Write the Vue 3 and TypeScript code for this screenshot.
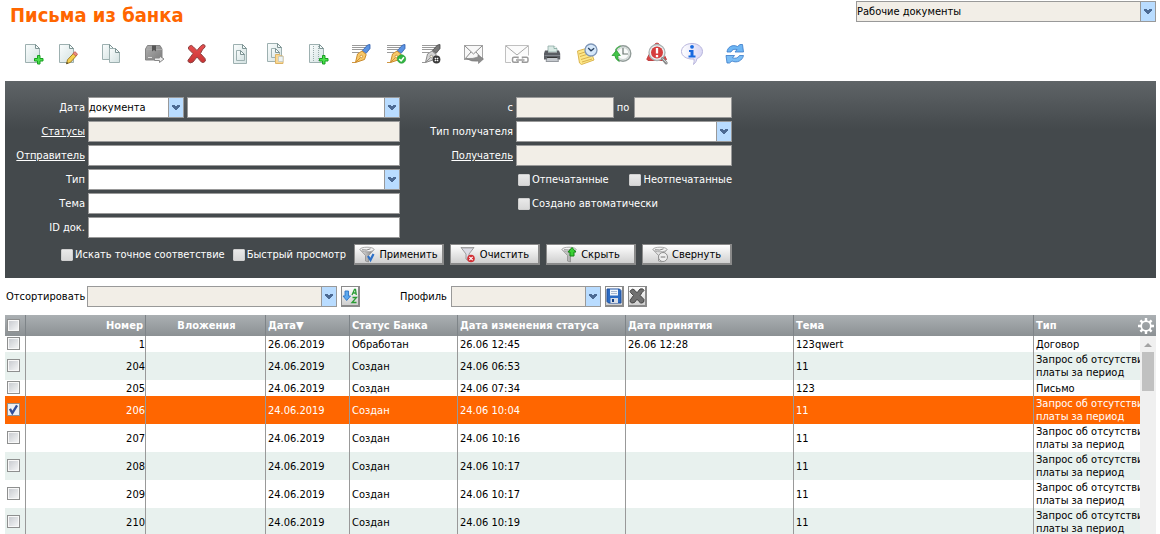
<script setup lang="ts">
import { ref } from 'vue'

interface Row {
  num: string
  date: string
  status: string
  changed: string
  accepted: string
  subject: string
  type: string
  checked: boolean
}

interface Tool {
  id: string
  title: string
}

const zeroPay = 'Запрос об отсутстви\nплаты за период'

function created(num: string, changed: string, subject = '11', type = zeroPay, checked = false): Row {
  return { num, date: '24.06.2019', status: 'Создан', changed, accepted: '', subject, type, checked }
}

const rows = ref<Row[]>([
  { num: '1', date: '26.06.2019', status: 'Обработан', changed: '26.06 12:45', accepted: '26.06 12:28', subject: '123qwert', type: 'Договор', checked: false },
  created('204', '24.06 06:53'),
  created('205', '24.06 07:34', '123', 'Письмо'),
  created('206', '24.06 10:04', '11', zeroPay, true),
  created('207', '24.06 10:16'),
  created('208', '24.06 10:17'),
  created('209', '24.06 10:17'),
  created('210', '24.06 10:19'),
])

const toolGroups: Tool[][] = [
  [{ id: 'create', title: 'Создать' }, { id: 'edit', title: 'Изменить' }],
  [{ id: 'copy', title: 'Копировать' }],
  [{ id: 'archive', title: 'В архив' }],
  [{ id: 'remove', title: 'Удалить' }],
  [{ id: 'template', title: 'Шаблон' }, { id: 'fromTemplate', title: 'Создать по шаблону' }],
  [{ id: 'addColumn', title: 'Добавить' }],
  [{ id: 'sign', title: 'Подписать' }, { id: 'verify', title: 'Проверить подпись' }, { id: 'unsign', title: 'Снять подпись' }],
  [{ id: 'send', title: 'Отправить' }],
  [
    { id: 'linked', title: 'Связанные письма' },
    { id: 'print', title: 'Печать' },
    { id: 'schedule', title: 'Запланировать' },
    { id: 'history', title: 'История' },
    { id: 'alert', title: 'Ошибки' },
    { id: 'info', title: 'Информация' },
  ],
  [{ id: 'refresh', title: 'Обновить' }],
]

const plus = '<path d="M16.5 13.500h2.500v3h3v2.500h-3v3h-2.500v-3h-3v-2.500h3z" fill="#4be04b" stroke="#18a022"/>'
const pen = (grip: string, gripEdge: string, nib: string, edge: string): string =>
  '<path d="M3 3.500h16M3 5.500h14M3 7.500h11M3 10.500h7" stroke="#9a9a9a"/>' +
  `<path d="M21 2.500v4l-4 5-3.500-3 5-5.500z" fill="${grip}" stroke="${gripEdge}" stroke-width=".8"/>` +
  `<path d="M13 9l4.200 3.500-1.700 5-9 3 2-8.500z" fill="${nib}" stroke="${edge}"/>` +
  `<path d="M3 20.500h3.500l5-5" fill="none" stroke="${edge}" stroke-width=".9"/><circle cx="12.300" cy="14.500" r="1.300" fill="#fff6dc" stroke="${edge}" stroke-width=".8"/>`
const page = (x: number, y: number, w: number, h: number): string =>
  `<path d="M${x} ${y}h${w - 4}l4 4v${h - 4}h-${w}z" fill="url(#paper)" stroke="#9db0b0"/>` +
  `<path d="M${x + w - 4} ${y}v4h4z" fill="#f4fafa" stroke="#7e9494"/>`

const icons: Record<string, string> = {
  create: page(4.5, 2.5, 14, 18) + plus,
  edit:
    page(3.5, 2.5, 14, 18) +
    '<path d="M10.500 21.800l1-4 6.500-7 2.800 2.500-6.300 7z" fill="#f5cf4d" stroke="#94721c" stroke-width=".9"/><path d="M17 11.500l1.800-1.900 2.800 2.500-1.800 1.900z" fill="#e98980" stroke="#b84d45" stroke-width=".7"/><path d="M10.300 22l.6-2 1.400 1.200z" fill="#333"/>',
  copy: page(3.5, 2.5, 11, 15) + page(10.5, 6.5, 10, 14),
  archive:
    '<path d="M3.500 7l2-3.500h12.500l2 3.500v11h-16.500z" fill="url(#steel)" stroke="#858585"/><path d="M4 7.500h16" stroke="#aaa"/><path d="M10 3.500h4v6l-2-1.500-2 1.500z" fill="#555"/><path d="M6 15.500h4" stroke="#ddd"/><path d="M12.500 16h5v-2l4.500 3-4.500 3.500v-2h-5z" fill="#ededed" stroke="#888"/>',
  remove:
    '<path d="M4 4.500q2.500-2.500 4.500.5l3.500 3.500q3.500-5 6-6 3 .5 2 2.500-3 2.500-4.500 6.500l4.500 5q1.500 3-1.500 4-2 .5-3.500-2l-3-3.500-4 5q-3 2-5-.5-.5-1.500 1-2.500l4-5.500-4-4q-1.500-1.500 0-3z" fill="url(#red)" stroke="#8d4545"/>',
  template: page(5.5, 2.5, 13, 19) + page(8.5, 8.5, 8, 10),
  fromTemplate:
    page(4.5, 1.5, 14, 18) + page(8.5, 6.5, 8, 9) +
    '<path d="M12.500 12.500h4l1 1.500h2.500v7.500h-7.500z" fill="#f9d793" stroke="#dcb468"/><path d="M15.500 14.500h4.500v5h-4.500z" fill="#eef3f3" stroke="#b9c4c4" stroke-width=".7"/>',
  addColumn:
    page(3.5, 2.5, 14, 18) +
    '<path d="M7.500 4v16M12.500 4v16" stroke="#9aabab" stroke-dasharray="1 1"/>' + plus,
  sign: pen('#5b93e2', '#2d5cab', '#f8c96a', '#c98a2c'),
  verify:
    pen('#5b93e2', '#2d5cab', '#f8c96a', '#c98a2c') +
    '<circle cx="17.500" cy="17" r="4.200" fill="#31b542" stroke="#2c9c3b" stroke-width=".7"/><path d="M15.200 17l1.900 1.900 2.800-3.700" fill="none" stroke="#fff" stroke-width="1.600"/>',
  unsign:
    pen('#777', '#484848', '#d4d4d4', '#8a8a8a') +
    '<circle cx="17.500" cy="17.500" r="3.900" fill="#3a3a3a"/><path d="M15.800 15.800l3.400 3.400M19.200 15.800l-3.400 3.400" stroke="#fff" stroke-width="1.200"/><circle cx="17.500" cy="17.500" r=".8" fill="#333"/>',
  send:
    '<path d="M2.500 3.500h18v14h-18z" fill="#f8f8f8" stroke="#a5a5a5"/><path d="M2.500 3.500l9 8.500 9-8.500M2.500 17.500l6.500-7.500M20.500 17.500l-6.500-7.500" fill="none" stroke="#888"/><path d="M4 16.500q7 .5 12-1.500v-2l5.500 4-5 4.500v-2.500q-7 1-12.500-2.500z" fill="#8d8d8d" stroke="#777" stroke-width=".6"/>',
  linked:
    '<path d="M.5 3.500h23v17h-23z" fill="#fbfbfb" stroke="#c0c0c0"/><path d="M1 4l11 9 11-9" fill="none" stroke="#a8a8a8"/><path d="M6 13.500h18v9h-18z" fill="#fff"/><g fill="none" stroke="#9a9a9a" stroke-width="1.500"><path d="M13 16.500v-1.200h-4q-1.500 0-1.500 1.500v2q0 1.500 1.500 1.500h4v-1.200"/><path d="M17.500 16.500v-1.200h4q1.500 0 1.500 1.500v2q0 1.500-1.500 1.500h-4v-1.200M11 18h8.500"/></g>',
  print:
    '<path d="M8 10V4h6l3 2.500V10z" fill="#d9e9e4" stroke="#91aaa6" stroke-width=".8"/><path d="M14 4v2.500h3" fill="#fff" stroke="#7da69b" stroke-width=".8"/><path d="M5 8.500h3v2h9v-2h2l1.200 3v6h-16.200v-6z" fill="#5a5d63"/><path d="M4.500 13.500h15.500" stroke="#83878e"/><path d="M7 15.500h10.500l1 4h-12.500z" fill="#c5c9ce" stroke="#747880" stroke-width=".7"/><path d="M7 15.500h10.500" stroke="#333"/>',
  schedule:
    '<path d="M2.500 9l12-3.500 4.500 12.500-12.500 4.500-2-1.500z" fill="#fde788" stroke="#dcb650"/><path d="M4 12l9-3M5 14.500l10-3M6 17.500l10-3M7 20l10-3" stroke="#cfa33c" stroke-width=".8"/><circle cx="16" cy="8" r="6" fill="#d6e8fa" stroke="#7f97b8" stroke-width="1.300"/><path d="M13.200 6l2.800 2.800 3.200-2.500" fill="none" stroke="#29405f" stroke-width="1.300"/>',
  history:
    '<circle cx="13" cy="11.500" r="7.800" fill="#e8eceb" stroke="#929c99" stroke-width="1.400"/><circle cx="13" cy="11.500" r="6" fill="#f8faf9" stroke="#c7d0cd"/><path d="M13 6v6h5" fill="none" stroke="#697670" stroke-width="1.200"/><path d="M6.500 8.500L2 13.500h2.800q.5 4 4.500 6-2-3-1.500-6h2.500z" fill="#42c548" stroke="#2c9a35" stroke-width=".8"/><path d="M5.500 8.500q1-3 5-4.500" fill="none" stroke="#50b657" stroke-width="1.300"/>',
  alert:
    '<path d="M10 2l2-1 2 1 7.500 15.500-3 1H3q-2-1-.5-3z" fill="#d84646" stroke="#c04242"/><circle cx="12" cy="10.500" r="8" fill="#edf1f1" stroke="#a9b0b1" stroke-width="1.300"/><circle cx="12" cy="10.500" r="6" fill="#d63d3d"/><path d="M12 6v5.500M12 13v2.200" stroke="#fff" stroke-width="2.300"/><path d="M17.500 16.500l3.700 4.500" stroke="#8b8b8b" stroke-width="3" stroke-linecap="round"/><path d="M17.500 16.500l4 4" stroke="#d4d4d4" stroke-width="1"/>',
  info:
    '<path d="M12 1.500c6 0 10.500 3.500 10.500 8 0 3.500-2.500 6-5.500 7q-.5 3.500-3.500 6 1-3 .5-5.500C6.500 17.500 1.500 14 1.500 9.500S6 1.500 12 1.500z" fill="url(#bubble)" stroke="#b9b6dd"/><circle cx="12" cy="4.800" r="1.900" fill="#1769df"/><path d="M9 8h4.500v5.500h2v2h-7v-2h2v-3.500h-1.500z" fill="#1769df"/>',
  refresh:
    '<path d="M4 10C4.500 5 9.500 2 14.500 4.500L17 2.500h2.500l1 7.500h-8.500l2-2.500Q9.500 6.500 8 10z" fill="#6db5f3" stroke="#3a7ac8" stroke-width=".8"/><path d="M20.500 13.500c-1 5-6.500 8-11.500 5.500l-2.500 2h-2.500l-1-7.500h8.500l-2 2.500q5 1 7-2.500z" fill="#7abdf5" stroke="#3a7ac8" stroke-width=".8"/>',
}

const funnel = (fill: string): string =>
  `<path d="M1 3.500l5.500 6V15l3 1V9.500l5.500-6z" fill="${fill}" stroke="#8d8d8d" stroke-width=".8"/><ellipse cx="8" cy="3.500" rx="7" ry="2.300" fill="#f4f4f4" stroke="#999" stroke-width=".8"/><path d="M3 3.800q5 1 8.500-1" fill="none" stroke="#777" stroke-width=".9"/>`

const filterButtons = [
  { label: 'Применить', icon: funnel('url(#steelLight)') + '<path d="M9 10l2.500 4 3-6" fill="none" stroke="#2b6fc7" stroke-width="2.200"/>' },
  { label: 'Очистить', icon: '<path d="M1 1.500h13L9 8v7l-3-2V8z" fill="#dcdce6" stroke="#888" stroke-width=".8"/><path d="M2 2h11" stroke="#aaa"/><circle cx="11" cy="12.500" r="3.800" fill="#d22f35"/><path d="M9.300 10.800l3.400 3.400M12.700 10.800l-3.400 3.400" stroke="#fff" stroke-width="1.100"/>' },
  { label: 'Скрыть', icon: funnel('url(#steelLight)') + '<path d="M11 1.500l4 4.500h-2v4h-4V6H7z" fill="#3ad034" stroke="#128614"/>' },
  { label: 'Свернуть', icon: funnel('#e6e6e6') + '<circle cx="11" cy="11" r="4.500" fill="#efefef" stroke="#8d8d8d"/><path d="M8.700 11h4.600" stroke="#777"/>' },
]

const dateKind = ref('документа')
</script>

<template>
  <main class="screen">
    <svg class="defs" aria-hidden="true">
      <defs>
        <linearGradient id="paper" x1="0" y1="0" x2="1" y2="1"><stop offset="0" stop-color="#fafdfd" /><stop offset="1" stop-color="#d3e1e1" /></linearGradient>
        <linearGradient id="steel" x1="0" y1="0" x2="1" y2="1"><stop offset="0" stop-color="#b0b0b0" /><stop offset="1" stop-color="#7c7c7c" /></linearGradient>
        <linearGradient id="steelLight" x1="0" x2="1"><stop offset="0" stop-color="#f0f0f0" /><stop offset="1" stop-color="#777" /></linearGradient>
        <linearGradient id="red" x1="0" y1="0" x2="0" y2="1"><stop offset="0" stop-color="#e85050" /><stop offset="1" stop-color="#c93232" /></linearGradient>
        <linearGradient id="bubble" x1="0" x2="1"><stop offset="0" stop-color="#fff" /><stop offset="1" stop-color="#d9d7f5" /></linearGradient>
      </defs>
    </svg>

    <header class="top">
      <h1>Письма из банка</h1>
      <div class="combo muted scope">
        <select aria-label="Раздел"><option>Рабочие документы</option></select>
        <svg class="arrow" viewBox="0 0 14 19"><path d="M3 7h3v1h2V7h3v2h-1v1H9v1H8v1H6v-1H5v-1H4V9H3z" /></svg>
      </div>
    </header>

    <nav class="toolbar" aria-label="Действия">
      <div v-for="(group, i) in toolGroups" :key="i" class="group">
        <button v-for="t in group" :key="t.id" type="button" :title="t.title" :aria-label="t.title">
          <svg viewBox="0 0 24 24" fill="none" v-html="icons[t.id]"></svg>
        </button>
      </div>
    </nav>

    <form class="filter" @submit.prevent>
      <div class="fields">
        <label for="f-date">Дата</label>
        <div class="line">
          <div class="combo kind">
            <select id="f-date" v-model="dateKind"><option>документа</option></select>
            <svg class="arrow" viewBox="0 0 14 19"><path d="M3 7h3v1h2V7h3v2h-1v1H9v1H8v1H6v-1H5v-1H4V9H3z" /></svg>
          </div>
          <div class="combo grow">
            <select aria-label="Период"><option></option></select>
            <svg class="arrow" viewBox="0 0 14 19"><path d="M3 7h3v1h2V7h3v2h-1v1H9v1H8v1H6v-1H5v-1H4V9H3z" /></svg>
          </div>
        </div>
        <label for="f-from">с</label>
        <div class="line period">
          <input id="f-from" class="box" type="text" disabled />
          <label for="f-to">по</label>
          <input id="f-to" class="box" type="text" disabled />
        </div>

        <a href="#" class="name">Статусы</a>
        <input class="box" type="text" aria-label="Статусы" disabled />
        <label for="f-rtype">Тип получателя</label>
        <div class="combo">
          <select id="f-rtype"><option></option></select>
          <svg class="arrow" viewBox="0 0 14 19"><path d="M3 7h3v1h2V7h3v2h-1v1H9v1H8v1H6v-1H5v-1H4V9H3z" /></svg>
        </div>

        <a href="#" class="name">Отправитель</a>
        <input class="box" type="text" aria-label="Отправитель" />
        <a href="#" class="name">Получатель</a>
        <input class="box" type="text" aria-label="Получатель" disabled />

        <label for="f-type">Тип</label>
        <div class="combo">
          <select id="f-type"><option></option></select>
          <svg class="arrow" viewBox="0 0 14 19"><path d="M3 7h3v1h2V7h3v2h-1v1H9v1H8v1H6v-1H5v-1H4V9H3z" /></svg>
        </div>
        <div class="line checks">
          <label class="check"><input type="checkbox" />Отпечатанные</label>
          <label class="check"><input type="checkbox" />Неотпечатанные</label>
        </div>

        <label for="f-subj">Тема</label>
        <input id="f-subj" class="box" type="text" />
        <div class="line checks">
          <label class="check"><input type="checkbox" />Создано автоматически</label>
        </div>

        <label for="f-id">ID док.</label>
        <input id="f-id" class="box" type="text" />
      </div>

      <div class="actions">
        <label class="check"><input type="checkbox" />Искать точное соответствие</label>
        <label class="check"><input type="checkbox" />Быстрый просмотр</label>
        <div class="buttons">
          <button v-for="b in filterButtons" :key="b.label" type="button" class="btn">
            <svg viewBox="0 0 16 17" fill="none" v-html="b.icon"></svg>{{ b.label }}
          </button>
        </div>
      </div>
    </form>

    <section class="sorting">
      <label for="s-sort" class="sort-label">Отсортировать</label>
      <div class="combo muted sort">
        <select id="s-sort"><option></option></select>
        <svg class="arrow" viewBox="0 0 14 19"><path d="M3 7h3v1h2V7h3v2h-1v1H9v1H8v1H6v-1H5v-1H4V9H3z" /></svg>
      </div>
      <button type="button" class="mini" aria-label="Сортировать">
        <svg viewBox="0 0 16 18" fill="none">
          <path d="M3 4h3.500v5h2L4.700 13.500 1 9h2z" fill="#5ba8ee" stroke="#2f74c4" stroke-width=".9" />
          <path d="M10 8l2.500-5.500h1l.8 5.500M11.500 6h3M10.500 10.500h4L10 15.500h4.500" stroke="#2a9c34" stroke-width="1.300" />
        </svg>
      </button>
      <label for="s-prof" class="prof-label">Профиль</label>
      <div class="combo muted prof">
        <select id="s-prof"><option></option></select>
        <svg class="arrow" viewBox="0 0 14 19"><path d="M3 7h3v1h2V7h3v2h-1v1H9v1H8v1H6v-1H5v-1H4V9H3z" /></svg>
      </div>
      <button type="button" class="mini" aria-label="Сохранить профиль">
        <svg viewBox="0 0 16 18" fill="none">
          <path d="M1 2h12.500L15 3.500V16H2.500L1 14.500z" fill="#2c6cc4" stroke="#1f4f9c" />
          <path d="M4 2.500h8v6H4z" fill="#f2f6fb" /><path d="M5 4.500h6M5 6.500h6" stroke="#a9b9cf" />
          <path d="M4.500 11h7.500v5H4.500z" fill="#d7dde6" /><path d="M6 12h2v3H6z" fill="#123f86" />
        </svg>
      </button>
      <button type="button" class="mini" aria-label="Удалить профиль">
        <svg viewBox="0 0 16 18" fill="none">
          <path d="M1.500 3.500q2.500-3 4.500 0l2 2.300 3-3.800q3.500-1 4 1.500-2.500 2-3.800 5l3.800 4q.5 3-2 3.500-1.500.5-3-1.500l-2-2.300-2.500 3.300q-3 1.500-4.500-1 0-1.500 1-2.500l2.500-3.500-3-3q-1-1 0-2z" fill="#707070" stroke="#444" />
        </svg>
      </button>
    </section>

    <section class="grid">
      <table>
        <colgroup>
          <col class="c-check" /><col class="c-num" /><col class="c-att" /><col class="c-date" /><col class="c-status" />
          <col class="c-wide" /><col class="c-wide" /><col class="c-subj" /><col />
        </colgroup>
        <thead>
          <tr>
            <th><input type="checkbox" class="tick" aria-label="Выбрать все" /></th>
            <th class="num">Номер</th>
            <th class="mid">Вложения</th>
            <th>Дата▼</th>
            <th>Статус Банка</th>
            <th>Дата изменения статуса</th>
            <th>Дата принятия</th>
            <th>Тема</th>
            <th>
              <div class="last">
                <span>Тип</span>
                <button type="button" class="gear" aria-label="Настройка столбцов">
                  <svg viewBox="0 0 16 16" fill="none" stroke="#fff">
                    <circle cx="8" cy="8" r="4.800" stroke-width="1.700" />
                    <path d="M8 0v3M8 13v3M0 8h3M13 8h3M2.400 2.400l2 2M11.600 11.600l2 2M13.600 2.400l-2 2M4.400 11.600l-2 2" stroke-width="2.400" />
                  </svg>
                </button>
              </div>
            </th>
          </tr>
        </thead>
        <tbody>
          <tr v-for="r in rows" :key="r.num" :class="{ selected: r.checked }">
            <td><input v-model="r.checked" type="checkbox" class="tick" :aria-label="'Письмо ' + r.num" /></td>
            <td class="num">{{ r.num }}</td>
            <td></td>
            <td>{{ r.date }}</td>
            <td>{{ r.status }}</td>
            <td>{{ r.changed }}</td>
            <td>{{ r.accepted }}</td>
            <td>{{ r.subject }}</td>
            <td>{{ r.type }}</td>
          </tr>
        </tbody>
      </table>
      <div class="scroll" aria-hidden="true">
        <svg viewBox="0 0 16 16"><path d="M4 11l4-4 4 4z" fill="#a3a3a3" /></svg>
        <div class="thumb"></div>
      </div>
    </section>
  </main>
</template>

<style>
body {
  margin: 0;
  background: #fff;
  overflow: hidden;
}
</style>

<style scoped>
.screen {
  display: flex;
  flex-direction: column;
  height: 100vh;
  box-sizing: border-box;
  padding: 1px 4px 0 5px;
  overflow: hidden;
  font: 11px/13px Tahoma, "DejaVu Sans Condensed", "DejaVu Sans", sans-serif;
  color: #000;
}
.screen *,
.screen *::before {
  box-sizing: border-box;
}
.defs {
  position: absolute;
  width: 0;
  height: 0;
}
input,
select,
button {
  margin: 0;
  font: inherit;
  color: inherit;
}
.top {
  display: flex;
  justify-content: space-between;
  height: 41px;
}
h1 {
  margin: 2px 0 0 5px;
  font-size: 20px;
  line-height: 24px;
  font-weight: bold;
  color: #f60;
}
.combo {
  display: grid;
  height: 21px;
  border: 1px solid #999;
  background: #fff;
  color: #000;
}
.combo > * {
  grid-area: 1 / 1;
}
.combo select {
  width: 100%;
  height: 19px;
  padding: 0;
  border: 0;
  border-radius: 0;
  background: none;
  appearance: none;
}
.arrow {
  justify-self: end;
  width: 15px;
  height: 19px;
  border-left: 1px solid #999;
  background: #b9dcff;
  fill: #4c6a93;
  pointer-events: none;
}
.muted {
  background: #f2eee7;
}
.scope {
  width: 300px;
}
.toolbar {
  display: flex;
  gap: 19px;
  height: 39px;
  padding-left: 16px;
}
.group {
  display: flex;
  gap: 11px;
}
.toolbar button {
  width: 24px;
  height: 24px;
  padding: 0;
  border: 0;
  background: none;
}
.toolbar svg {
  display: block;
  width: 24px;
  height: 24px;
}
.filter {
  padding: 16px 0 13px;
  color: #fff;
  background: #44494c linear-gradient(#5f6467, #44494c) no-repeat 0 0 / 100% 48px;
}
.fields {
  display: grid;
  grid-template-columns: 83px 312px 116px 216px;
  grid-auto-rows: 21px;
  row-gap: 3px;
  align-items: center;
}
.fields > label,
.name {
  padding-right: 3px;
  text-align: right;
  color: #fff;
}
.line {
  display: flex;
  align-items: center;
}
.kind {
  width: 96px;
  margin-right: 3px;
}
.grow {
  flex: 1;
}
.box {
  width: 100%;
  height: 21px;
  padding: 0 2px;
  border: 1px solid #999;
  border-radius: 0;
  background: #fff;
  color: #000;
}
.box:disabled {
  background: #f2eee7;
}
.period {
  justify-content: space-between;
}
.period .box {
  width: 98px;
}
.period label {
  padding-right: 2px;
}
.checks {
  grid-column: 4;
  justify-content: space-between;
  padding-left: 2px;
}
.check {
  display: flex;
  align-items: center;
  gap: 2px;
  white-space: nowrap;
}
.check input {
  width: 12px;
  height: 12px;
  border: 1px solid #cfcfcf;
  border-radius: 1px;
  background: linear-gradient(#e9e9e9, #d8d8d8);
  appearance: none;
}
.check input:checked {
  background: #3f5f8a;
}
.actions {
  display: flex;
  align-items: center;
  justify-content: flex-end;
  gap: 8px;
  width: 727px;
  margin-top: 6px;
}
.buttons {
  display: flex;
  gap: 6px;
}
.btn {
  display: flex;
  align-items: center;
  justify-content: center;
  gap: 4px;
  width: 90px;
  height: 21px;
  padding: 0;
  border: 1px solid #8a8a8a;
  border-width: 1px 2px 2px 1px;
  background: linear-gradient(#fff, #cfcfcf);
  color: #000;
}
.btn svg {
  width: 16px;
  height: 17px;
}
.sorting {
  display: flex;
  align-items: center;
  height: 37px;
}
.sort-label {
  width: 82px;
  padding-left: 1px;
}
.sort {
  width: 250px;
}
.prof-label {
  width: 51px;
  margin-left: 40px;
}
.prof {
  width: 150px;
}
.mini {
  width: 19px;
  height: 21px;
  margin-left: 4px;
  padding: 0;
  border: 1px solid #8a8a8a;
  border-width: 1px 2px 2px 1px;
  background: linear-gradient(#fff, #cfcfcf);
}
.mini svg {
  display: block;
  width: 16px;
  height: 18px;
}
.grid {
  position: relative;
  flex: 1;
  min-height: 0;
  overflow: hidden;
}
table {
  width: 100%;
  table-layout: fixed;
  border-collapse: separate;
  border-spacing: 0;
}
.c-check { width: 21px; }
.c-num,
.c-att { width: 120px; }
.c-date { width: 84px; }
.c-status { width: 108px; }
.c-wide { width: 168px; }
.c-subj { width: 240px; }
th,
td {
  padding: 0 0 0 2px;
  border-right: 1px solid #999;
  text-align: left;
  vertical-align: middle;
  white-space: pre;
}
th:last-child,
td:last-child {
  border-right: 0;
}
th {
  height: 21px;
  color: #fff;
  font-weight: bold;
  border-color: #7e8488;
}
thead tr {
  background: linear-gradient(#abb0b3, #8b9093);
}
td {
  height: 16px;
  padding-top: 1px;
  padding-bottom: 1px;
}
td:first-child {
  padding-top: 0;
  padding-bottom: 1px;
}
.num {
  padding-right: 0;
  text-align: right;
}
th.num {
  padding-right: 2px;
}
th.mid {
  text-align: center;
}
tbody tr:nth-child(even) {
  background: #e8f1ee;
}
tbody tr.selected {
  background: #f60;
  color: #fff;
}
.last {
  display: flex;
  align-items: center;
  justify-content: space-between;
  padding-right: 2px;
  white-space: normal;
}
.gear {
  width: 16px;
  height: 16px;
  padding: 0;
  border: 0;
  background: none;
}
.gear svg {
  display: block;
}
.tick {
  display: block;
  width: 13px;
  height: 13px;
  border: 1px solid #8e8f8f;
  background: linear-gradient(135deg, #c9ccd1, #f3f4f5) content-box, #f8f8f8;
  padding: 1px;
  appearance: none;
}
.tick:checked {
  background: url("data:image/svg+xml,%3Csvg xmlns='http://www.w3.org/2000/svg' viewBox='0 0 11 11'%3E%3Cpath d='M2.500 5l2 3.500L8.500 2' fill='none' stroke='%23314f9b' stroke-width='2'/%3E%3C/svg%3E") border-box #eef0f4;
}
.scroll {
  position: absolute;
  top: 21px;
  right: 0;
  bottom: 0;
  width: 16px;
  background: #f0f0f0;
}
.scroll svg {
  display: block;
  width: 16px;
  height: 16px;
}
.thumb {
  width: 12px;
  height: 39px;
  margin-left: 2px;
  background: #c1c1c1;
}
</style>
